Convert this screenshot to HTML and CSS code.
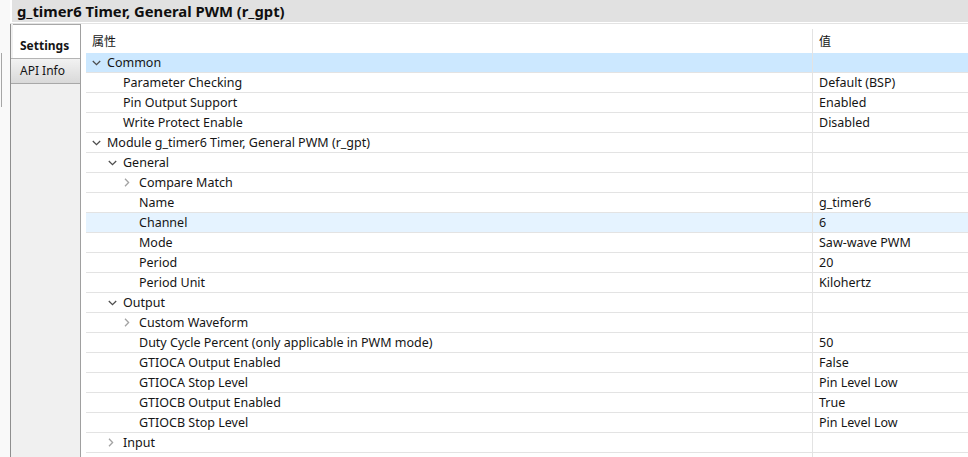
FILE: index.html
```html
<!DOCTYPE html>
<html>
<head>
<meta charset="utf-8">
<link rel="stylesheet" href="styles.css">
</head>
<body>
<div class="app">
  <div class="gutter"><div class="gutter-line"></div></div>
  <div class="main">
    <div class="title">g_timer6 Timer, General PWM (r_gpt)</div>
    <div class="sep"></div>
    <div class="body">
      <div class="tabs">
        <div class="tab active">Settings</div>
        <div class="tab">API Info</div>
      </div>
      <div class="table">
        <div class="head">
          <div class="hname">属性</div>
          <div class="hval">值</div>
        </div>
        <div class="row selected"><div class="name l0"><span class="chev"><svg width="9" height="6" viewBox="0 0 9 6"><polyline points="0.8,1 4.5,4.6 8.2,1" class="dn"/></svg></span>Common</div><div class="val"></div></div>
        <div class="row"><div class="name l1"><span class="chev"></span>Parameter Checking</div><div class="val">Default (BSP)</div></div>
        <div class="row"><div class="name l1"><span class="chev"></span>Pin Output Support</div><div class="val">Enabled</div></div>
        <div class="row"><div class="name l1"><span class="chev"></span>Write Protect Enable</div><div class="val">Disabled</div></div>
        <div class="row"><div class="name l0"><span class="chev"><svg width="9" height="6" viewBox="0 0 9 6"><polyline points="0.8,1 4.5,4.6 8.2,1" class="dn"/></svg></span>Module g_timer6 Timer, General PWM (r_gpt)</div><div class="val"></div></div>
        <div class="row"><div class="name l1"><span class="chev"><svg width="9" height="6" viewBox="0 0 9 6"><polyline points="0.8,1 4.5,4.6 8.2,1" class="dn"/></svg></span>General</div><div class="val"></div></div>
        <div class="row"><div class="name l2"><span class="chev"><svg width="6" height="9" viewBox="0 0 6 9"><polyline points="1,0.8 4.6,4.5 1,8.2" class="rt"/></svg></span>Compare Match</div><div class="val"></div></div>
        <div class="row"><div class="name l2"><span class="chev"></span>Name</div><div class="val">g_timer6</div></div>
        <div class="row hover"><div class="name l2"><span class="chev"></span>Channel</div><div class="val">6</div></div>
        <div class="row"><div class="name l2"><span class="chev"></span>Mode</div><div class="val">Saw-wave PWM</div></div>
        <div class="row"><div class="name l2"><span class="chev"></span>Period</div><div class="val">20</div></div>
        <div class="row"><div class="name l2"><span class="chev"></span>Period Unit</div><div class="val">Kilohertz</div></div>
        <div class="row"><div class="name l1"><span class="chev"><svg width="9" height="6" viewBox="0 0 9 6"><polyline points="0.8,1 4.5,4.6 8.2,1" class="dn"/></svg></span>Output</div><div class="val"></div></div>
        <div class="row"><div class="name l2"><span class="chev"><svg width="6" height="9" viewBox="0 0 6 9"><polyline points="1,0.8 4.6,4.5 1,8.2" class="rt"/></svg></span>Custom Waveform</div><div class="val"></div></div>
        <div class="row"><div class="name l2"><span class="chev"></span>Duty Cycle Percent (only applicable in PWM mode)</div><div class="val">50</div></div>
        <div class="row"><div class="name l2"><span class="chev"></span>GTIOCA Output Enabled</div><div class="val">False</div></div>
        <div class="row"><div class="name l2"><span class="chev"></span>GTIOCA Stop Level</div><div class="val">Pin Level Low</div></div>
        <div class="row"><div class="name l2"><span class="chev"></span>GTIOCB Output Enabled</div><div class="val">True</div></div>
        <div class="row"><div class="name l2"><span class="chev"></span>GTIOCB Stop Level</div><div class="val">Pin Level Low</div></div>
        <div class="row"><div class="name l1"><span class="chev"><svg width="6" height="9" viewBox="0 0 6 9"><polyline points="1,0.8 4.6,4.5 1,8.2" class="rt"/></svg></span>Input</div><div class="val"></div></div>
        <div class="row"><div class="name l1"><span class="chev"></span></div><div class="val"></div></div>
      </div>
    </div>
  </div>
</div>
</body>
</html>
```

FILE: styles.css
```css
* { box-sizing: border-box; }
html, body {
  margin: 0;
  padding: 0;
  width: 968px;
  height: 457px;
  overflow: hidden;
  background: #ffffff;
  font-family: "Noto Sans", "Noto Sans CJK SC", sans-serif;
  font-size: 12.5px;
  color: #151515;
}
.app {
  display: flex;
  height: 457px;
}
.gutter {
  width: 10px;
  background: #f9f9f9;
  padding-top: 53px;
}
.gutter-line {
  width: 1px;
  height: 54px;
  margin-left: 1px;
  background: #a6a6a6;
}
.main {
  flex: 1;
  display: flex;
  flex-direction: column;
  min-width: 0;
}
.title {
  height: 22px;
  flex-shrink: 0;
  background: #e1e1e1;
  padding-left: 5px;
  font-weight: bold;
  font-size: 14.8px;
  line-height: 22px;
  color: #0f0f0f;
  white-space: nowrap;
  margin-left: 2px;
}
.sep {
  height: 2px;
  flex-shrink: 0;
  border-top: 1px solid #ffffff;
  border-bottom: 1px solid #e3e3e3;
}
.body {
  flex: 1;
  display: flex;
  min-height: 0;
}
.tabs {
  width: 71px;
  background: #f0f0f0;
  border-left: 1px solid #8e8e8e;
  border-right: 1px solid #a0a0a0;
  display: flex;
  flex-direction: column;
  font-size: 12px;
}
.tab {
  height: 26px;
  flex-shrink: 0;
  padding-left: 9px;
  line-height: 24px;
  border-top: 1px solid #b4b4b4;
  border-bottom: 1px solid #a8a8a8;
  background: linear-gradient(#f2f2f2, #d9d9d9);
  white-space: nowrap;
}
.tab.active {
  height: 34px;
  background: #ffffff;
  font-weight: bold;
  line-height: 41px;
  border-bottom: none;
  border-top: 1px solid #a8a8a8;
  margin-left: 2px;
  padding-left: 7px;
}
.table {
  flex: 1;
  padding-left: 5px;
  display: flex;
  flex-direction: column;
  min-width: 0;
}
.head {
  height: 29px;
  flex-shrink: 0;
  display: flex;
  font-family: "Noto Sans CJK SC", sans-serif;
  font-size: 12px;
}
.hname {
  width: 726px;
  padding-left: 6px;
  padding-top: 8px;
}
.hval {
  flex: 1;
  border-left: 1px solid #e3e3e3;
  margin-top: 5px;
  padding-left: 6px;
  padding-top: 3px;
}
.row {
  height: 20px;
  display: flex;
  border-bottom: 1px solid #e3e3e3;
  white-space: nowrap;
  flex-shrink: 0;
}
.row.selected { background: #cce8ff; }
.row.hover { background: #e5f3ff; }
.name {
  width: 726px;
  display: flex;
  align-items: center;
  padding-left: 5px;
}
.name.l1 { padding-left: 21px; }
.name.l2 { padding-left: 37px; }
.chev {
  width: 16px;
  height: 19px;
  display: flex;
  align-items: center;
  padding-left: 1px;
}
.chev svg { display: block; }
.dn { fill: none; stroke: #4d4d4d; stroke-width: 1.3; }
.rt { fill: none; stroke: #a3a3a3; stroke-width: 1.3; }
.val {
  flex: 1;
  border-left: 1px solid #e3e3e3;
  padding-left: 6px;
  display: flex;
  align-items: center;
}
```
